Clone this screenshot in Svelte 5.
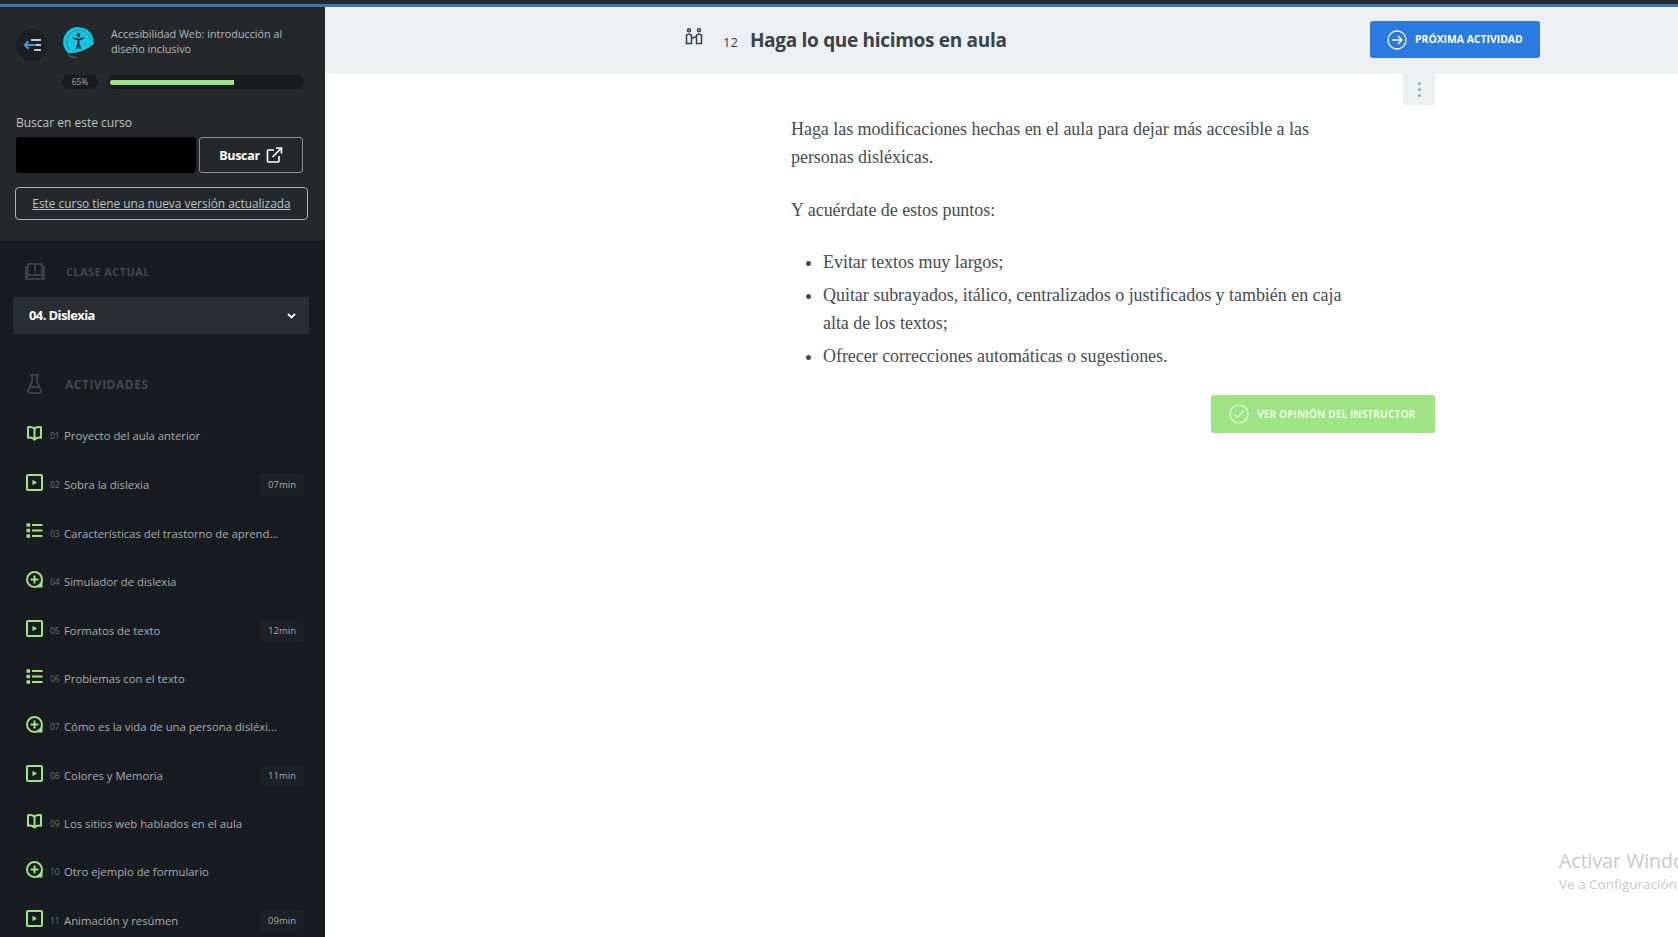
<script lang="ts">
  const activities = [
    { n: "01", title: "Proyecto del aula anterior", kind: "book" },
    { n: "02", title: "Sobra la dislexia", kind: "play", time: "07min" },
    { n: "03", title: "Características del trastorno de aprendizaje", kind: "list", cls: "short" },
    { n: "04", title: "Simulador de dislexia", kind: "plus" },
    { n: "05", title: "Formatos de texto", kind: "play", time: "12min" },
    { n: "06", title: "Problemas con el texto", kind: "list", cls: "shorter" },
    { n: "07", title: "Cómo es la vida de una persona disléxica hoy", kind: "plus" },
    { n: "08", title: "Colores y Memoria", kind: "play", time: "11min" },
    { n: "09", title: "Los sitios web hablados en el aula", kind: "book", cls: "shorter" },
    { n: "10", title: "Otro ejemplo de formulario", kind: "plus" },
    { n: "11", title: "Animación y resúmen", kind: "play", time: "09min" },
  ];
</script>

<div class="page">
  <div class="topline"></div>
  <div class="layout">
    <aside class="sidebar">
      <div class="side-top">
        <div class="course">
          <button class="back" aria-label="Volver">
            <svg width="19" height="14" viewBox="0 0 19 14" fill="none" stroke-width="2">
              <path d="M8 2h10M11 12h7" stroke="#c4c8ca" />
              <path d="M13 7H2M5.500 3.300 1.800 7l3.700 3.700" stroke="#3d9fe0" />
              <path d="M13 7h5" stroke="#c4c8ca" />
            </svg>
          </button>
          <svg class="logo" width="32" height="32" viewBox="0 0 32 32">
            <path d="M5 29a15 15 0 0 0 9 2.500" stroke="#555b5e" stroke-width="1.200" fill="none" />
            <path d="M5.500 27.500Q20 27 31 18A15 15 0 0 0 16 1 15 15 0 0 0 5.500 27.500z" fill="#16c3e0" />
            <path d="M7 24A12 12 0 0 1 16 4a12 12 0 0 1 11.500 9" stroke="#0f93aa" stroke-width="1" fill="none" />
            <path d="M16 1a15 15 0 0 1 15 16" stroke="#1a3a42" stroke-width="1" fill="none" />
            <circle cx="15.500" cy="9" r="1.900" fill="#10262e" />
            <path d="M10 12 15.500 13.500 21 12M15.500 13.500v4.500M15.500 18 13.500 23M15.500 18l2 5" stroke="#10262e" stroke-width="1.800" fill="none" />
          </svg>
          <p class="course-title">Accesibilidad Web: introducción al diseño inclusivo</p>
        </div>
        <div class="progress">
          <span class="pct">65%</span>
          <div class="track"><div class="fill"></div></div>
        </div>
        <label class="search-label" for="q">Buscar en este curso</label>
        <div class="search">
          <input id="q" type="text" />
          <button class="search-btn">
            Buscar
            <svg width="17" height="16" viewBox="0 0 17 16" fill="none" stroke="#fff" stroke-width="1.600">
              <path d="M8 3H2.500a1 1 0 0 0-1 1v10a1 1 0 0 0 1 1h9.500a1 1 0 0 0 1-1V9" />
              <path d="M6.500 10 15.500 1M10 1h5.500v5.500" />
            </svg>
          </button>
        </div>
        <a class="update" href="#top">Este curso tiene una nueva versión actualizada</a>
      </div>

      <div class="side-list">
        <div class="section-head current">
          <svg width="20" height="17" viewBox="0 0 20 17" fill="none" stroke="#454a4e" stroke-width="1.500">
            <path d="M3 1h14v11H3zM1 3v13h18V3M3 12 1 16M17 12l2 4M10 2v6M10 8.500v1.500" />
          </svg>
          <span>CLASE ACTUAL</span>
        </div>
        <button class="select">
          <span>04. Dislexia</span>
          <svg width="9" height="6" viewBox="0 0 9 6" fill="none" stroke="#fff" stroke-width="1.800">
            <path d="M1 1l3.500 3.500L8 1" />
          </svg>
        </button>
        <div class="section-head activities">
          <svg width="15" height="20" viewBox="0 0 15 20" fill="none" stroke="#454a4e" stroke-width="1.500">
            <path d="M3 1h9M5 1v7L1.200 16a2 2 0 0 0 1.800 3h9a2 2 0 0 0 1.800-3L10 8V1M3.500 13h8" />
          </svg>
          <span>ACTIVIDADES</span>
        </div>
        <ul class="items">
          {#each activities as a}
            <li class="item {a.cls ?? ''}" class:plus={a.kind === "plus"}>
              <svg class="kind" width="17" height="17" viewBox="0 0 17 17" fill="none" stroke="#9ee384" stroke-width="2">
                {#if a.kind === "book"}
                  <path d="M8.500 3.800C7 2.300 4 1.800 2 2.300v10.400c2.500-.4 5 .2 6.500 1.800 1.500-1.600 4-2.200 6.500-1.800V2.300c-2-.5-5 0-6.500 1.500zM8.500 3.800v10.700" />
                {:else if a.kind === "play"}
                  <rect x="1" y="1" width="15" height="15" rx="1" />
                  <path d="M6.500 5.700v5.600l4.500-2.800z" fill="#9ee384" stroke="none" />
                {:else if a.kind === "list"}
                  <path d="M6 3h10.500M6 8.500h10.500M6 14h10.500" />
                  <path d="M.5 1.200h3.600v3.600H.5zM.5 6.700h3.600v3.600H.5zM.5 12.200h3.600v3.600H.5z" fill="#9ee384" stroke="none" />
                {:else}
                  <path d="M16 8.500A7.500 7.500 0 1 1 8.500 1 7.500 7.500 0 0 1 16 8.500zM8.500 4.500v8M4.500 8.500h8" />
                  <path d="M16.500 10v6.500H10z" fill="#9ee384" stroke="none" />
                {/if}
              </svg>
              <span class="num">{a.n}</span>
              <span class="name">{a.title}</span>
              {#if a.time}<span class="time">{a.time}</span>{/if}
            </li>
          {/each}
        </ul>
      </div>
    </aside>

    <main class="main">
      <header class="bar">
        <svg class="task" width="18" height="17" viewBox="0 0 18 17" fill="none" stroke="#3a4147" stroke-width="1.500">
          <circle cx="4" cy="2.300" r="1.500" />
          <circle cx="14" cy="2.300" r="1.500" />
          <path d="M1.500 15.500V7l2.500-1 2.500 1v8.500zM11.500 15.500V7l2.500-1 2.500 1v8.500zM6.500 10.500l5-2" />
        </svg>
        <span class="task-num">12</span>
        <h1>Haga lo que hicimos en aula</h1>
        <button class="next">
          <svg width="20" height="20" viewBox="0 0 20 20" fill="none" stroke="#fff" stroke-width="1.300">
            <circle cx="10" cy="10" r="9" />
            <path d="M5 10h10M11 6l4 4-4 4" />
          </svg>
          <span>PRÓXIMA ACTIVIDAD</span>
        </button>
      </header>

      <div class="content">
        <div class="dots"><i></i><i></i><i></i></div>
        <div class="text">
          <p>Haga las modificaciones hechas en el aula para dejar más accesible a las personas disléxicas.</p>
          <p>Y acuérdate de estos puntos:</p>
          <ul>
            <li>Evitar textos muy largos;</li>
            <li>Quitar subrayados, itálico, centralizados o justificados y también en caja alta de los textos;</li>
            <li>Ofrecer correcciones automáticas o sugestiones.</li>
          </ul>
        </div>
        <button class="opinion">
          <svg width="20" height="20" viewBox="0 0 20 20" fill="none" stroke="#e9fbe2" stroke-width="1.200">
            <circle cx="10" cy="10" r="9" />
            <path d="M5.500 10.500l3 3 6-6.500" />
          </svg>
          VER OPINIÓN DEL INSTRUCTOR
        </button>
      </div>
    </main>
  </div>

  <div class="watermark">
    <div class="wm-big">Activar Windows</div>
    <div class="wm-small">Ve a Configuración para activar Windows.</div>
  </div>
</div>

<style>
  :global(body) {
    margin: 0;
    background: #fff;
    font-family: "Open Sans", sans-serif;
  }

  .page {
    position: relative;
    height: 937px;
    overflow: hidden;
  }

  .topline {
    height: 4px;
    background: #23272e;
    border-bottom: 3px solid #3f74ad;
  }

  .layout {
    display: flex;
    height: 930px;
  }

  /* ---- Sidebar ---- */
  .sidebar {
    width: 325px;
    flex-shrink: 0;
    background: #181b1f;
    overflow: hidden;
  }

  .side-top {
    background: #24282b;
    height: 234px;
    padding: 21px 17px 0 16px;
    box-sizing: border-box;
  }

  .course {
    display: flex;
    align-items: flex-start;
    height: 34px;
  }

  .back {
    width: 32px;
    height: 32px;
    margin-top: 1px;
    border: none;
    border-radius: 50%;
    background: #1c2023;
    padding: 0;
    display: flex;
    align-items: center;
    justify-content: center;
    flex-shrink: 0;
  }

  .logo {
    margin: -2px 0 0 15px;
    flex-shrink: 0;
  }

  .course-title {
    margin: -2px 0 0 16px;
    font-size: 10.800px;
    line-height: 15px;
    color: #b4b9bc;
  }

  .progress {
    display: flex;
    align-items: center;
    margin: 13px 0 0 46px;
  }

  .pct {
    width: 36px;
    height: 14px;
    border-radius: 7px;
    background: #181b1f;
    font-size: 8.500px;
    line-height: 14px;
    text-align: center;
    color: #a4a9ac;
  }

  .track {
    margin-left: 10px;
    width: 196px;
    height: 14px;
    border-radius: 7px;
    background: #181b1f;
    display: flex;
    align-items: center;
    padding-left: 2px;
    box-sizing: border-box;
  }

  .fill {
    width: 124px;
    height: 5px;
    border-radius: 2px 0 0 2px;
    background: #9ee384;
  }

  .search-label {
    display: block;
    margin-top: 26px;
    font-size: 12px;
    line-height: 16px;
    color: #c0c4c6;
  }

  .search {
    display: flex;
    gap: 3px;
    margin-top: 6px;
  }

  .search input {
    width: 180px;
    height: 36px;
    box-sizing: border-box;
    background: #000;
    border: none;
    border-radius: 3px;
  }

  .search-btn {
    width: 104px;
    height: 36px;
    display: flex;
    align-items: center;
    justify-content: center;
    gap: 6px;
    background: transparent;
    border: 1px solid #8b9094;
    border-radius: 3px;
    color: #fff;
    font-family: "Open Sans", sans-serif;
    font-weight: 700;
    font-size: 12.500px;
    letter-spacing: -0.3px;
  }

  .update {
    display: block;
    margin: 14px 0 0 -1px;
    height: 33px;
    box-sizing: border-box;
    border: 1px solid #a9b4b8;
    border-radius: 4px;
    text-align: center;
    font-size: 11.900px;
    line-height: 31px;
    color: #b9c4c8;
  }

  .side-list {
    padding: 4px 16px 0 13px;
  }

  .section-head {
    display: flex;
    align-items: center;
    color: #43484c;
    font-weight: 700;
  }

  .section-head.current {
    height: 52px;
    padding-left: 12px;
    gap: 21px;
    font-size: 11px;
    letter-spacing: 0.4px;
  }

  .section-head.activities {
    height: 50px;
    margin-top: 25px;
    padding-left: 14px;
    gap: 23px;
    font-size: 12px;
    letter-spacing: 0.5px;
  }

  .select {
    width: 296px;
    height: 37px;
    display: flex;
    align-items: center;
    justify-content: space-between;
    padding: 0 13px 0 16px;
    background: #2a2d31;
    border: none;
    color: #fff;
    font-family: "Open Sans", sans-serif;
    font-weight: 700;
    font-size: 13px;
    letter-spacing: -0.6px;
  }

  .select span {
    margin-bottom: 2px;
  }

  .items {
    list-style: none;
    margin: 2px 0 0;
    padding: 0 5px 0 13px;
  }

  .item {
    height: 49px;
    display: flex;
    align-items: center;
    font-size: 11.300px;
    color: #a9adb0;
  }

  .item.short {
    height: 48px;
  }

  .item.shorter {
    height: 47px;
  }

  .kind {
    margin-top: -5px;
    flex-shrink: 0;
  }

  .num {
    width: 14px;
    margin-left: 7px;
    font-size: 8.500px;
    color: #6b7075;
    flex-shrink: 0;
  }

  .name {
    flex: 1;
    min-width: 0;
    white-space: nowrap;
    overflow: hidden;
    text-overflow: ellipsis;
    max-width: 216px;
  }

  .time {
    height: 22px;
    padding: 0 8px;
    margin-left: auto;
    background: #1d2024;
    border-radius: 3px;
    font-size: 9.500px;
    line-height: 22px;
    color: #a4a8ab;
    flex: none;
  }

  /* ---- Main ---- */
  .main {
    flex: 1;
    min-width: 0;
  }

  .bar {
    height: 67px;
    box-sizing: border-box;
    padding: 0 138px 0 360px;
    display: flex;
    align-items: center;
    background: #ecf0f2;
    color: #3a4147;
  }

  .task {
    margin-top: -8px;
    flex-shrink: 0;
  }

  .task-num {
    margin: 2px 0 0 20px;
    font-size: 13px;
  }

  h1 {
    margin: 0 0 1px 12px;
    font-size: 19px;
    font-weight: 700;
    letter-spacing: -0.3px;
  }

  .next {
    margin: 0 0 2px auto;
    width: 170px;
    height: 37px;
    display: flex;
    align-items: center;
    padding: 0 0 0 17px;
    gap: 8px;
    background: #2a7ae2;
    border: none;
    border-radius: 3px;
    color: #fff;
    font-family: "Open Sans", sans-serif;
    font-weight: 700;
    font-size: 10.400px;
  }

  .next span {
    margin-bottom: 2px;
  }

  .content {
    position: relative;
    padding-left: 466px;
    width: 644px;
  }

  .dots {
    position: absolute;
    top: 0;
    right: 0;
    width: 32px;
    height: 31px;
    background: #ecf0f2;
    border-radius: 0 0 2px 2px;
    display: flex;
    flex-direction: column;
    align-items: center;
    justify-content: center;
    gap: 3px;
  }

  .dots i {
    width: 3px;
    height: 3px;
    border-radius: 50%;
    background: #9aa5aa;
  }

  .text {
    width: 555px;
    padding-top: 41px;
    font-family: "Liberation Serif", serif;
    font-size: 18px;
    letter-spacing: -0.04px;
    line-height: 28px;
    color: #444c53;
  }

  .text p {
    margin: 0 0 25px;
  }

  .text ul {
    margin: -1px 0 0;
    padding-left: 32px;
  }

  .text li {
    margin-bottom: 5px;
  }

  .opinion {
    display: flex;
    align-items: center;
    gap: 8px;
    width: 224px;
    height: 38px;
    margin: 25px 0 0 420px;
    padding: 0 0 0 18px;
    background: #9ee384;
    border: none;
    border-radius: 3px;
    color: #eafbe3;
    font-family: "Open Sans", sans-serif;
    font-weight: 700;
    font-size: 10.300px;
    white-space: nowrap;
  }

  /* ---- Activation watermark ---- */
  .watermark {
    position: absolute;
    left: 1559px;
    top: 848px;
    white-space: nowrap;
    font-family: "Open Sans", sans-serif;
    color: #c9c9c9;
    pointer-events: none;
  }

  .wm-big {
    font-size: 19.500px;
    line-height: 26px;
  }

  .wm-small {
    font-size: 13.500px;
    line-height: 20px;
  }
</style>
